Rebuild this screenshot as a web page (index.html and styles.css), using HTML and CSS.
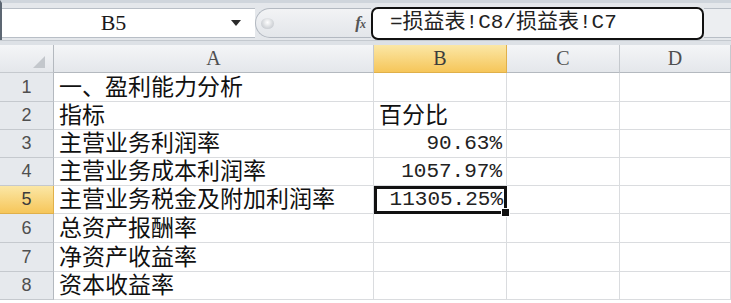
FILE: index.html
```html
<!DOCTYPE html>
<html lang="zh-CN">
<head>
  <meta charset="UTF-8" />
  <title>盈利能力分析</title>
  <link rel="stylesheet" href="styles.css">
</head>
<body>
  <!-- Formula bar -->
  <div class="formula-bar">
    <div class="name-box">
      <span class="cell-ref">B5</span>
      <span class="caret"></span>
    </div>
    <div class="func-area">
      <span class="grip"></span>
      <span class="fx">f<i>x</i></span>
    </div>
    <div class="formula-input">=损益表!C8/损益表!C7</div>
    <div class="bar-rest"></div>
  </div>
  <div class="bar-gap"></div>

  <!-- Sheet grid -->
  <div class="sheet">
    <div class="corner"><span class="corner-tri"></span></div>
    <div class="col-head">A</div>
    <div class="col-head active">B</div>
    <div class="col-head">C</div>
    <div class="col-head">D</div>

    <div class="row-head">1</div>
    <div class="cell">一、盈利能力分析</div>
    <div class="cell"></div><div class="cell"></div><div class="cell"></div>

    <div class="row-head">2</div>
    <div class="cell">指标</div>
    <div class="cell">百分比</div>
    <div class="cell"></div><div class="cell"></div>

    <div class="row-head">3</div>
    <div class="cell">主营业务利润率</div>
    <div class="cell num">90.63%</div>
    <div class="cell"></div><div class="cell"></div>

    <div class="row-head">4</div>
    <div class="cell">主营业务成本利润率</div>
    <div class="cell num">1057.97%</div>
    <div class="cell"></div><div class="cell"></div>

    <div class="row-head active">5</div>
    <div class="cell">主营业务税金及附加利润率</div>
    <div class="cell num selected">11305.25%<span class="fill-handle"></span></div>
    <div class="cell"></div><div class="cell"></div>

    <div class="row-head">6</div>
    <div class="cell">总资产报酬率</div>
    <div class="cell"></div><div class="cell"></div><div class="cell"></div>

    <div class="row-head">7</div>
    <div class="cell">净资产收益率</div>
    <div class="cell"></div><div class="cell"></div><div class="cell"></div>

    <div class="row-head">8</div>
    <div class="cell">资本收益率</div>
    <div class="cell"></div><div class="cell"></div><div class="cell"></div>
  </div>
</body>
</html>
```

FILE: styles.css
```css
/* ---------- Page ---------- */
body {
  margin: 0;
  width: 731px;
  height: 303px;
  overflow: hidden;
  background: #fff;
  font-family: "Noto Sans CJK SC", sans-serif;
  color: #111;
}

/* ---------- Formula bar ---------- */
.formula-bar {
  height: 40px;
  box-sizing: border-box;
  border-top: 3px solid #cfd5dc;
  border-left: 2px solid #5d6773;
  background: #e4e7eb;
  display: flex;
  align-items: flex-end;
}
.name-box {
  width: 253px;
  height: 30px;
  box-sizing: border-box;
  background: #fff;
  border-top: 1px solid #b8bec6;
  border-bottom: 1px solid #b8bec6;
  display: flex;
  align-items: center;
  margin-bottom: 2px;
}
.cell-ref {
  flex: 1;
  text-align: center;
  font-family: "Liberation Serif", serif;
  font-size: 22px;
  color: #1a1a1a;
  padding-right: 6px;
}
.caret {
  width: 0;
  height: 0;
  border-left: 5px solid transparent;
  border-right: 5px solid transparent;
  border-top: 6px solid #2a2a2a;
  margin-right: 14px;
}
.func-area {
  width: 116px;
  height: 30px;
  box-sizing: border-box;
  margin-bottom: 2px;
  background: linear-gradient(#f2f3f5, #e3e6ea);
  border: 1px solid #b3b9c1;
  border-right: none;
  border-radius: 15px 0 0 15px;
  display: flex;
  align-items: center;
  justify-content: space-between;
  padding: 0 6px 0 5px;
}
.grip {
  width: 13px;
  height: 11px;
  border-radius: 50%;
  background: radial-gradient(circle at 50% 40%, #fff 0%, #d3d6da 60%, #b9bec5 100%);
}
.fx {
  font-family: "Liberation Serif", serif;
  font-style: italic;
  font-weight: bold;
  font-size: 17px;
  color: #555;
  letter-spacing: -1px;
}
.fx i { font-size: 12px; }
.formula-input {
  width: 333px;
  height: 33px;
  box-sizing: border-box;
  border: 2px solid #111;
  border-radius: 7px;
  background: #fff;
  font-family: "Liberation Mono", "Noto Sans CJK SC", monospace;
  font-size: 21px;
  line-height: 28px;
  padding-left: 17px;
  white-space: nowrap;
  color: #222;
}
.bar-rest {
  flex: 1;
  height: 30px;
  margin-bottom: 2px;
  background: #eceef1;
  border-top: 1px solid #b8bec6;
  border-bottom: 1px solid #b8bec6;
  box-sizing: border-box;
}
.bar-gap {
  height: 5px;
  background: #dde1e6;
  border-top: 1px solid #c4c9cf;
  box-sizing: border-box;
}

/* ---------- Sheet grid ---------- */
.sheet {
  display: grid;
  grid-template-columns: 54px 320px 133px 113px 1fr;
  grid-template-rows: 28px 29px 28px 28px 28px 28px 29px 29px 28px;
}
.corner,
.col-head,
.row-head {
  box-sizing: border-box;
  background: linear-gradient(#f4f5f7, #e4e7eb);
  border-right: 1px solid #c5c9ce;
  border-bottom: 1px solid #c5c9ce;
  color: #4f4f4f;
  display: flex;
  align-items: center;
  justify-content: center;
}
.corner {
  position: relative;
  border-right-color: #b4b9bf;
}
.corner-tri {
  position: absolute;
  right: 8px;
  bottom: 4px;
  width: 0;
  height: 0;
  border-left: 12px solid transparent;
  border-bottom: 12px solid #c3c7cc;
}
.col-head {
  font-family: "Liberation Serif", serif;
  font-size: 20px;
  border-bottom-color: #b4b9bf;
}
.row-head {
  font-family: "Liberation Sans", sans-serif;
  font-size: 18px;
  background: #e6e9ed;
  border-right-color: #b4b9bf;
}
.col-head.active,
.row-head.active {
  background: linear-gradient(#fbe7a6, #f6c65a);
  color: #3c3c3c;
  border-color: #e0b04a;
}

.cell {
  box-sizing: border-box;
  border-right: 1px solid #dadcdf;
  border-bottom: 1px solid #dadcdf;
  font-size: 23px;
  line-height: 23px;
  padding: 0 4px 4px 5px;
  display: flex;
  align-items: flex-end;
  white-space: nowrap;
  color: #111;
}
.cell.num {
  justify-content: flex-end;
  font-family: "Liberation Mono", monospace;
  font-size: 21px;
  line-height: 22px;
  padding-bottom: 2px;
  color: #222;
}
.cell.selected {
  position: relative;
  border: 3px solid #111;
  padding-right: 1px;
  padding-bottom: 0;
}
.fill-handle {
  position: absolute;
  right: -6px;
  bottom: -6px;
  width: 7px;
  height: 7px;
  background: #111;
  border: 1px solid #fff;
}
```
